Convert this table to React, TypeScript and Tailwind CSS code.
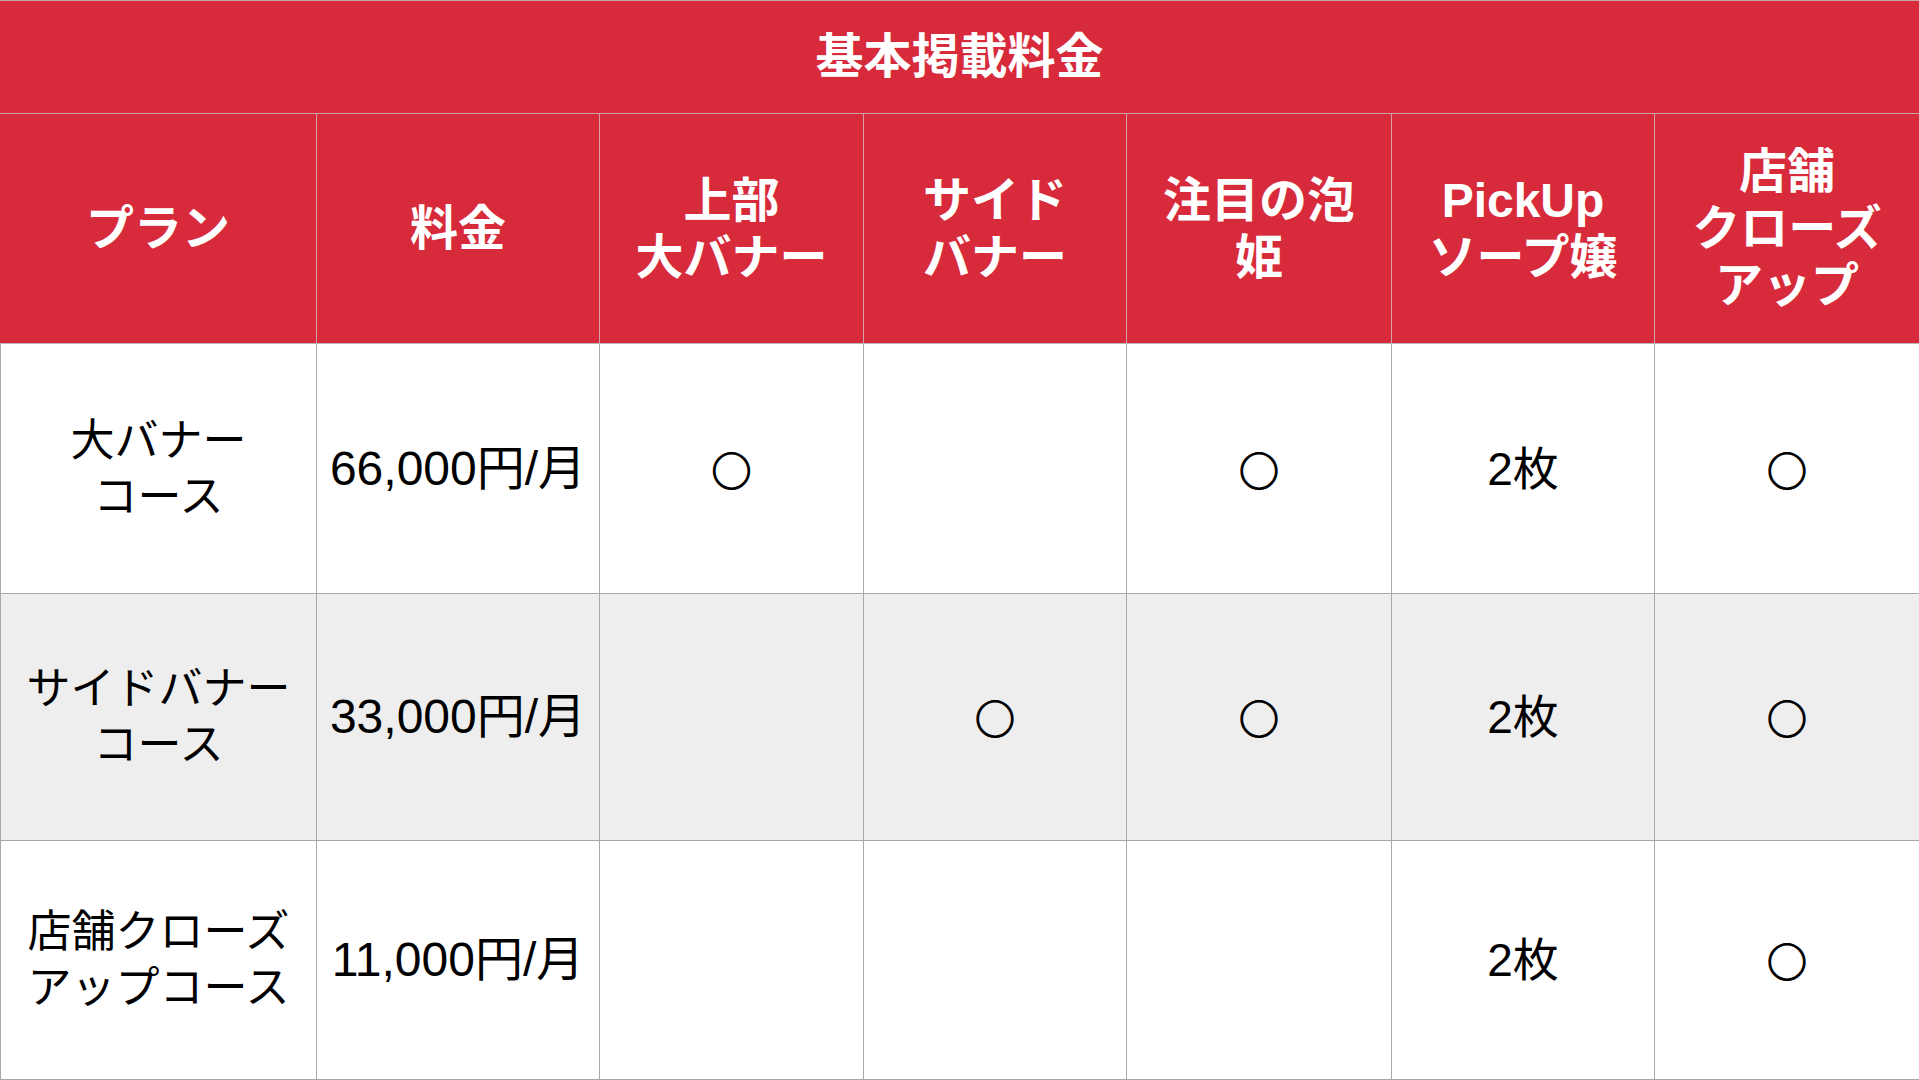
const cols = 'grid-cols-[317px_283px_264px_263px_265px_263px_264px]'

const headers = [
  ['プラン'],
  ['料金'],
  ['上部', '大バナー'],
  ['サイド', 'バナー'],
  ['注目の泡', '姫'],
  ['PickUp', 'ソープ嬢'],
  ['店舗', 'クローズ', 'アップ'],
]

const rows = [
  {
    plan: ['大バナー', 'コース'],
    price: '66,000円/月',
    cells: ['○', '', '○', '2枚', '○'],
    bg: 'bg-white',
    h: 'h-[250px]',
  },
  {
    plan: ['サイドバナー', 'コース'],
    price: '33,000円/月',
    cells: ['', '○', '○', '2枚', '○'],
    bg: 'bg-[#eeeeee]',
    h: 'h-[247px]',
  },
  {
    plan: ['店舗クローズ', 'アップコース'],
    price: '11,000円/月',
    cells: ['', '', '', '2枚', '○'],
    bg: 'bg-white',
    h: 'h-[239px]',
  },
]

function Lines({ lines }: { lines: string[] }) {
  return (
    <div className="text-center">
      {lines.map((l, i) => (
        <div key={i}>{l}</div>
      ))}
    </div>
  )
}

export default function App() {
  return (
    <div
      className="w-[1919px] h-[1080px] overflow-hidden bg-white text-[46px] leading-[56px]"
      style={{ fontFamily: '"Liberation Sans", "Noto Sans CJK JP", sans-serif' }}
    >
      {/* タイトル */}
      <div className="h-[114px] bg-[#d72a3b] border-t border-b border-[#c9a4a7] flex items-center justify-center text-white font-bold text-[48px]">
        基本掲載料金
      </div>

      {/* 見出し行 */}
      <div className={`grid ${cols} h-[230px] bg-[#d72a3b] text-white font-bold text-[48px] leading-[57px]`}>
        {headers.map((h, i) => (
          <div
            key={i}
            className={`flex items-center justify-center border-b border-b-[#b8b8b8] ${i < 6 ? 'border-r border-r-[#d6a3a8]' : ''}`}
          >
            <Lines lines={h} />
          </div>
        ))}
      </div>

      {/* プラン行 */}
      {rows.map((r, ri) => (
        <div key={ri} className={`grid ${cols} ${r.h} ${r.bg} text-black`}>
          <div className="flex items-center justify-center border-l border-r border-b border-[#a8a8a8] text-[44px]">
            <Lines lines={r.plan} />
          </div>
          <div className="flex items-center justify-center border-r border-b border-[#a8a8a8] text-[48px]">
            {r.price}
          </div>
          {r.cells.map((c, ci) => (
            <div
              key={ci}
              className={`flex items-center justify-center border-b border-[#a8a8a8] ${ci < 4 ? 'border-r' : ''}`}
            >
              {c === '○' ? (
                <span
                  className="text-[40px] [-webkit-text-stroke:1.2px_black]"
                  style={{ fontFamily: '"Noto Sans CJK JP", sans-serif' }}
                >
                  ○
                </span>
              ) : (
                c
              )}
            </div>
          ))}
        </div>
      ))}
    </div>
  )
}
